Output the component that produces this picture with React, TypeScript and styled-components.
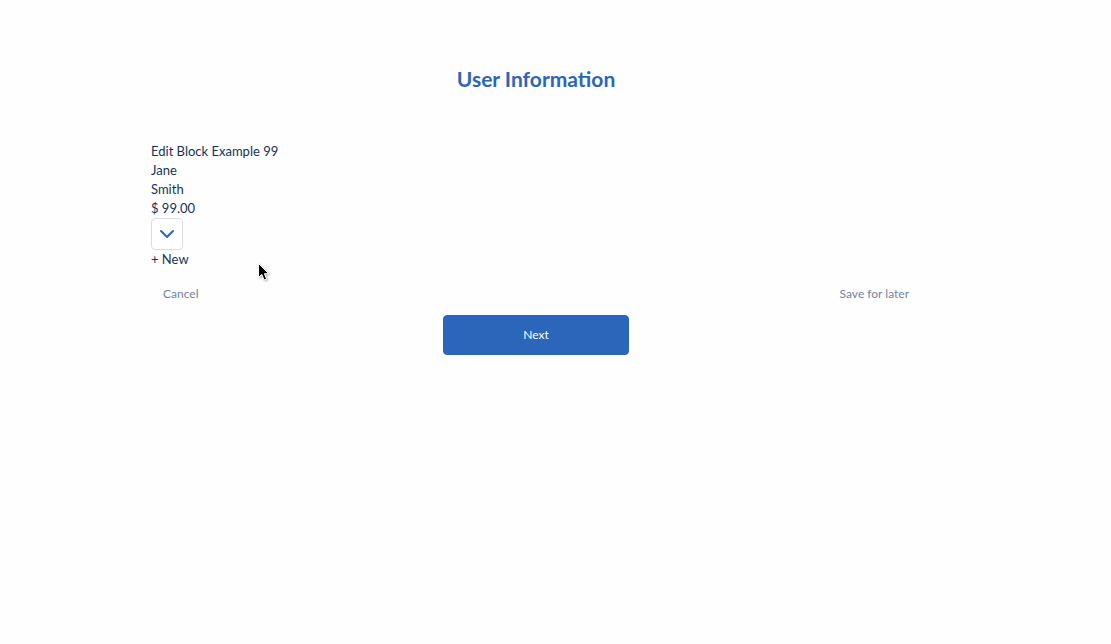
import React from "react";
import styled, { createGlobalStyle } from "styled-components";

const GlobalStyle = createGlobalStyle`
  * { box-sizing: border-box; }
  body {
    margin: 0;
    background: #fefefe;
    color: #16325c;
    font-family: Lato, "Liberation Sans", sans-serif;
    font-size: 13px;
    line-height: 19px;
  }
  button { font: inherit; cursor: pointer; }
`;

const Page = styled.main`
  position: relative;
  padding: 63px 39px 64px 0;
`;

const Form = styled.form`
  max-width: 770px;
  margin: 0 auto;
`;

const Title = styled.h1`
  margin: 0 0 48px;
  color: #2b66ba;
  font-size: 21px;
  line-height: 31px;
  font-weight: 700;
  text-align: center;
`;

const Block = styled.div`
  display: flex;
  flex-direction: column;
  align-items: flex-start;
`;

const Line = styled.div``;

const MenuButton = styled.button`
  display: flex;
  align-items: center;
  justify-content: center;
  width: 32px;
  height: 32px;
  padding: 0;
  border: 1px solid #d8dde6;
  border-radius: 4px;
  background: #ffffff;
  color: #2b66ba;
`;

const NewButton = styled.button`
  padding: 0;
  border: 0;
  background: none;
  color: inherit;
`;

const Actions = styled.div`
  display: flex;
  justify-content: space-between;
  margin: 15px 0 12px;
  padding: 0 12px;
`;

const TextButton = styled.button`
  padding: 0;
  border: 0;
  background: none;
  color: #7483a3;
  font-size: 12px;
`;

const NextButton = styled.button`
  display: block;
  width: 186px;
  height: 40px;
  margin: 0 auto;
  padding: 0 0 2px;
  border: 1px solid #2467c4;
  border-radius: 4px;
  background: #2b66ba;
  color: #ffffff;
  font-size: 12px;
`;

const Pointer = styled.svg`
  position: absolute;
  left: 257px;
  top: 262px;
  filter: drop-shadow(1px 1px 1px rgba(0, 0, 0, 0.3));
  pointer-events: none;
`;

const lines = ["Edit Block Example 99", "Jane", "Smith", "$ 99.00"];

export default function App() {
  return (
    <>
      <GlobalStyle />
      <Page>
        <Form onSubmit={(e) => e.preventDefault()}>
          <Title>User Information</Title>
          <Block>
            {lines.map((text) => (
              <Line key={text}>{text}</Line>
            ))}
            <MenuButton type="button" aria-label="Show actions">
              <svg width="16" height="16" viewBox="0 0 16 16" fill="none">
                <path
                  d="M2 5L8 11L14 5"
                  stroke="currentColor"
                  strokeWidth="2"
                  strokeLinecap="round"
                  strokeLinejoin="round"
                />
              </svg>
            </MenuButton>
            <NewButton type="button">+ New</NewButton>
          </Block>
          <Actions>
            <TextButton type="button">Cancel</TextButton>
            <TextButton type="button">Save for later</TextButton>
          </Actions>
          <NextButton type="submit">Next</NextButton>
        </Form>
        <Pointer width="14" height="20" viewBox="0 0 14 20" aria-hidden="true">
          <path
            d="M1.5 1.5V15.5L4.8 12.5L7 18L9.6 17L7.4 11.7H11.8Z"
            fill="#000000"
            stroke="#ffffff"
            strokeWidth="1"
          />
        </Pointer>
      </Page>
    </>
  );
}
